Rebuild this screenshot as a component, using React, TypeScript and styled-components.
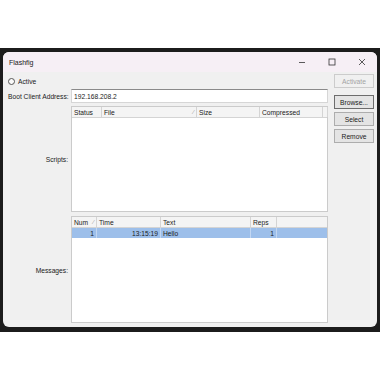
import React from "react";
import styled, { createGlobalStyle } from "styled-components";

const Global = createGlobalStyle`
  html, body { margin: 0; padding: 0; background: #ffffff; }
  body { font-family: "Liberation Sans", Arial, sans-serif; font-size: 6.7px; color: #1a1a1a; }
  * { box-sizing: border-box; }
`;

const Frame = styled.div`
  margin-top: 48px;
  width: 380px;
  height: 284px;
  background: #1c1c1c;
  padding: 4px 3px 5px 3px;
`;

const Window = styled.div`
  width: 100%;
  height: 100%;
  background: #f0f0f0;
  border-radius: 6px;
  overflow: hidden;
  display: flex;
  flex-direction: column;
`;

const TitleBar = styled.div`
  height: 20px;
  background: #f6eff5;
  display: flex;
  align-items: center;
  padding-left: 6px;
  font-size: 7px;
  color: #202020;
`;

const Title = styled.div`
  flex: 1;
`;

const Ctrl = styled.div`
  width: 30px;
  height: 20px;
  display: flex;
  align-items: center;
  justify-content: center;
`;

const Body = styled.div`
  flex: 1;
  display: flex;
  padding: 2px 3px 4px 0;
  gap: 6px;
`;

const Form = styled.div`
  display: grid;
  grid-template-columns: 65px 257px;
  grid-template-rows: 15px 14px 109px 111px;
  column-gap: 3px;
`;

const RadioRow = styled.div`
  grid-column: 1 / span 2;
  display: flex;
  align-items: center;
  padding-left: 5px;
  gap: 3px;
`;

const Radio = styled.span`
  width: 7px;
  height: 7px;
  border-radius: 50%;
  border: 1px solid #555;
  background: #fafafa;
`;

const Label = styled.div<{ $mid?: boolean; $top?: number }>`
  display: flex;
  align-items: center;
  justify-content: ${(p) => (p.$mid ? "flex-end" : "flex-start")};
  padding-left: ${(p) => (p.$mid ? "0" : "5px")};
  padding-top: ${(p) => p.$top || 0}px;
  white-space: nowrap;
`;

const Input = styled.div`
  background: #fff;
  border: 1px solid #d6d6d6;
  border-top-color: #8a8a8a;
  display: flex;
  align-items: center;
  padding-left: 2px;
`;

const List = styled.div<{ $gapTop: number }>`
  margin-top: ${(p) => p.$gapTop}px;
  background: #fff;
  border: 1px solid #cbcbcb;
  display: flex;
  flex-direction: column;
`;

const Row = styled.div<{ $header?: boolean; $sel?: boolean }>`
  display: flex;
  height: ${(p) => (p.$header ? 11 : 10)}px;
  background: ${(p) => (p.$header ? "#f4f4f4" : p.$sel ? "#9dbfea" : "#fff")};
  border-bottom: ${(p) => (p.$header ? "1px solid #d4d4d4" : "none")};
`;

const Cell = styled.div<{ $w?: number; $right?: boolean; $header?: boolean; $sel?: boolean }>`
  ${(p) => (p.$w ? `width: ${p.$w}px; flex: none;` : "flex: 1;")}
  display: flex;
  align-items: center;
  justify-content: ${(p) => (p.$right ? "flex-end" : "space-between")};
  padding: 0 2px 0 2px;
  border-right: 1px solid ${(p) => (p.$header ? "#d4d4d4" : p.$sel ? "#c3d7f2" : "transparent")};
  white-space: nowrap;
  overflow: hidden;
  &:last-child { border-right: none; }
`;

const Sort = styled.span`
  color: #9a9a9a;
  font-size: 6px;
`;

const Buttons = styled.div`
  display: flex;
  flex-direction: column;
  width: 40px;
  gap: 3px;
`;

const Btn = styled.div<{ $disabled?: boolean; $def?: boolean; $extra?: number }>`
  height: 14px;
  margin-bottom: ${(p) => p.$extra || 0}px;
  border: 1px solid ${(p) => (p.$disabled ? "#cccccc" : p.$def ? "#6d6d6d" : "#adadad")};
  background: ${(p) => (p.$disabled ? "#f0f0f0" : "#e4e4e4")};
  color: ${(p) => (p.$disabled ? "#a3a3a3" : "#1a1a1a")};
  display: flex;
  align-items: center;
  justify-content: center;
`;

type Col = { name: string; w?: number; sort?: boolean };

const scriptCols: Col[] = [
  { name: "Status", w: 30 },
  { name: "File", w: 95, sort: true },
  { name: "Size", w: 63 },
  { name: "Compressed", w: 63 },
  { name: "", w: 5 },
  { name: "" },
];

const msgCols: Col[] = [
  { name: "Num", w: 25, sort: true },
  { name: "Time", w: 64 },
  { name: "Text", w: 90 },
  { name: "Reps", w: 26 },
  { name: "" },
];

const Header = ({ cols }: { cols: Col[] }) => (
  <Row $header>
    {cols.map((c, i) => (
      <Cell key={i} $w={c.w} $header>
        <span>{c.name}</span>
        {c.sort && <Sort>∕</Sort>}
      </Cell>
    ))}
  </Row>
);

export default function App() {
  return (
    <>
      <Global />
      <Frame>
        <Window>
          <TitleBar>
            <Title>Flashfig</Title>
            <Ctrl>
              <svg width="8" height="8" viewBox="0 0 8 8">
                <line x1="1" y1="4.5" x2="7" y2="4.5" stroke="#333" strokeWidth="0.8" />
              </svg>
            </Ctrl>
            <Ctrl>
              <svg width="8" height="8" viewBox="0 0 8 8">
                <rect x="1" y="1" width="6" height="6" fill="none" stroke="#333" strokeWidth="0.8" />
              </svg>
            </Ctrl>
            <Ctrl>
              <svg width="8" height="8" viewBox="0 0 8 8">
                <path d="M1 1 L7 7 M7 1 L1 7" stroke="#333" strokeWidth="0.8" />
              </svg>
            </Ctrl>
          </TitleBar>
          <Body>
            <Form>
              <RadioRow>
                <Radio />
                <span>Active</span>
              </RadioRow>
              <Label>Boot Client Address:</Label>
              <Input>192.168.208.2</Input>
              <Label $mid $top={3}>Scripts:</Label>
              <List $gapTop={3}>
                <Header cols={scriptCols} />
              </List>
              <Label $mid $top={6}>Messages:</Label>
              <List $gapTop={4}>
                <Header cols={msgCols} />
                <Row $sel>
                  <Cell $w={25} $right $sel>1</Cell>
                  <Cell $w={64} $right $sel>13:15:19</Cell>
                  <Cell $w={90} $sel>Hello</Cell>
                  <Cell $w={26} $right $sel>1</Cell>
                  <Cell $sel></Cell>
                </Row>
              </List>
            </Form>
            <Buttons>
              <Btn $disabled $extra={4}>Activate</Btn>
              <Btn $def>Browse...</Btn>
              <Btn>Select</Btn>
              <Btn>Remove</Btn>
            </Buttons>
          </Body>
        </Window>
      </Frame>
    </>
  );
}
